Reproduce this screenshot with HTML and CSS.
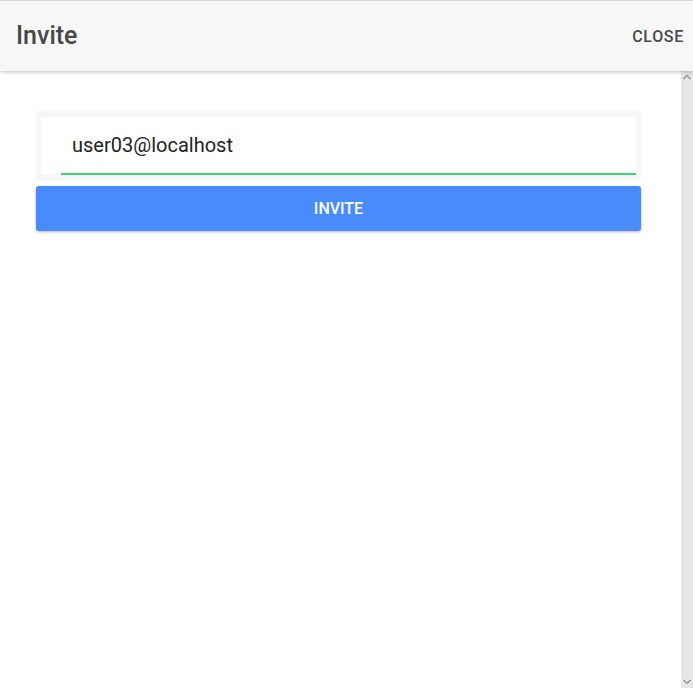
FILE: index.html
```html
<!DOCTYPE html>
<html>
<head>
<meta charset="utf-8">
<link rel="stylesheet" href="styles.css">
</head>
<body>
<div class="dialog">
  <header class="bar">
    <h1 class="title">Invite</h1>
    <span class="close">CLOSE</span>
  </header>
  <div class="body">
    <main class="content">
      <div class="field">
        <div class="field-inner">
          <span class="value">user03@localhost</span>
        </div>
      </div>
      <button class="invite">INVITE</button>
    </main>
    <div class="scrollbar">
      <svg class="arrow" width="12" height="12" viewBox="0 0 12 12"><path d="M2.5 8 L6 4.5 L9.5 8" fill="none" stroke="#8a8a8a" stroke-width="1.2"/></svg>
      <svg class="arrow" width="12" height="12" viewBox="0 0 12 12"><path d="M2.5 4 L6 7.5 L9.5 4" fill="none" stroke="#8a8a8a" stroke-width="1.2"/></svg>
    </div>
  </div>
</div>
</body>
</html>
```

FILE: styles.css
```css
html, body {
  margin: 0;
  padding: 0;
  background: #ffffff;
  font-family: Roboto, "Liberation Sans", sans-serif;
}
.dialog {
  width: 693px;
  height: 688px;
  display: flex;
  flex-direction: column;
  overflow: hidden;
}
.bar {
  height: 70px;
  border-top: 1px solid #d4d4d4;
  background: #f7f7f7;
  display: flex;
  align-items: center;
  justify-content: space-between;
  padding: 0 9px 0 16px;
  box-shadow: 0 1px 4px rgba(0,0,0,0.25);
  position: relative;
  z-index: 2;
  flex-shrink: 0;
}
.title {
  margin: 0;
  font-size: 25px;
  font-weight: 500;
  color: #474747;
  padding-bottom: 1px;
}
.close {
  font-size: 16px;
  font-weight: 500;
  color: #4a4a4a;
  letter-spacing: 0.7px;
}
.body {
  flex: 1;
  display: flex;
}
.content {
  flex: 1;
  padding: 40px 40px 0 36px;
}
.field {
  background: #f7f7f7;
  padding: 6px 5px 6px 5px;
}
.field-inner {
  background: #fff;
  height: 58px;
  padding: 0 0 0 20px;
  display: flex;
}
.value {
  flex: 1;
  border-bottom: 2px solid #40d46e;
  font-size: 20px;
  color: #222;
  padding: 16px 0 0 11px;
  box-sizing: border-box;
}
.invite {
  display: block;
  width: 100%;
  margin-top: 5px;
  height: 45px;
  border: 0;
  border-radius: 3px;
  background: #4a8bfb;
  color: #fff;
  font-family: Roboto, "Liberation Sans", sans-serif;
  font-size: 16px;
  font-weight: 500;
  box-shadow: 0 1px 3px rgba(0,0,0,0.3);
}
.scrollbar {
  width: 12px;
  background: #e6e6e6;
  display: flex;
  flex-direction: column;
  justify-content: space-between;
}
.arrow {
  display: block;
}
```
